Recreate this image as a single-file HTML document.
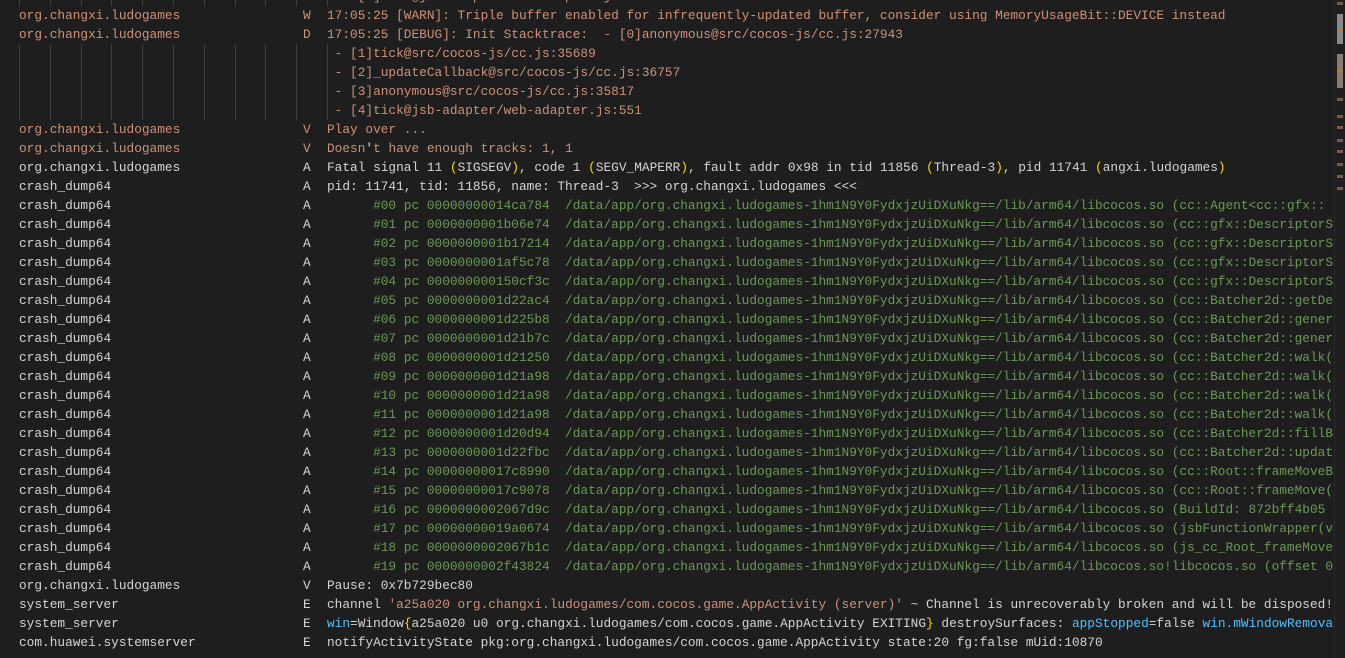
<!DOCTYPE html>
<html><head><style>
html,body{margin:0;padding:0;background:#1e1e1e;width:1345px;height:658px;overflow:hidden}
body{font-family:"Liberation Mono",monospace;font-size:12.8px;color:#d4d4d4;position:relative}
.r{position:absolute;left:0;height:19px;line-height:19px;white-space:pre;width:1335px;overflow:hidden}
.t{position:absolute;left:19px}.l{position:absolute;left:303px}.m{position:absolute;left:327px}
.o{color:#ce9178}.g{color:#6a9955}.y{color:#ffd700}.b{color:#4fc1ff}.bl{color:#569cd6}
.gd{position:absolute;width:1px;background:#404040;top:44px;height:76px}
.gu{position:absolute;width:1px;background:#404040;top:0;height:6px}
.sb{position:absolute;right:0;top:0;width:10px;height:658px;background:#1e1e1e;border-left:1px solid #2a2a2a}
.mk{position:absolute;right:2px;width:6px;height:3px;background:#7a5a4a}
</style></head><body>
<div class="gd" style="left:19px"></div><div class="gd" style="left:50px"></div><div class="gd" style="left:81px"></div><div class="gd" style="left:111px"></div><div class="gd" style="left:142px"></div><div class="gd" style="left:173px"></div><div class="gd" style="left:204px"></div><div class="gd" style="left:235px"></div><div class="gd" style="left:265px"></div><div class="gd" style="left:296px"></div><div class="gd" style="left:327px"></div>
<div class="gu" style="left:19px"></div><div class="gu" style="left:50px"></div><div class="gu" style="left:81px"></div><div class="gu" style="left:111px"></div><div class="gu" style="left:142px"></div><div class="gu" style="left:173px"></div><div class="gu" style="left:204px"></div><div class="gu" style="left:235px"></div><div class="gu" style="left:265px"></div><div class="gu" style="left:296px"></div><div class="gu" style="left:327px"></div>
<div class="r" style="top:-13px"><span class="m o">  - [4]tick@jsb-adapter/web-adapter.js:551</span></div>
<div class="r" style="top:6px"><span class="t o">org.changxi.ludogames</span><span class="l o">W</span><span class="m o">17:05:25 [WARN]: Triple buffer enabled for infrequently-updated buffer, consider using MemoryUsageBit::DEVICE instead</span></div>
<div class="r" style="top:25px"><span class="t o">org.changxi.ludogames</span><span class="l o">D</span><span class="m o">17:05:25 [DEBUG]: Init Stacktrace:  - [0]anonymous@src/cocos-js/cc.js:27943</span></div>
<div class="r" style="top:44px"><span class="m o"> - [1]tick@src/cocos-js/cc.js:35689</span></div>
<div class="r" style="top:63px"><span class="m o"> - [2]_updateCallback@src/cocos-js/cc.js:36757</span></div>
<div class="r" style="top:82px"><span class="m o"> - [3]anonymous@src/cocos-js/cc.js:35817</span></div>
<div class="r" style="top:101px"><span class="m o"> - [4]tick@jsb-adapter/web-adapter.js:551</span></div>
<div class="r" style="top:120px"><span class="t o">org.changxi.ludogames</span><span class="l o">V</span><span class="m o">Play over ...</span></div>
<div class="r" style="top:139px"><span class="t o">org.changxi.ludogames</span><span class="l o">V</span><span class="m o">Doesn<span style="color:#d4d4d4">'</span>t have enough tracks: 1, 1</span></div>
<div class="r" style="top:158px"><span class="t">org.changxi.ludogames</span><span class="l">A</span><span class="m">Fatal signal 11 <span class="y">(</span>SIGSEGV<span class="y">)</span>, code 1 <span class="y">(</span>SEGV_MAPERR<span class="y">)</span>, fault addr 0x98 in tid 11856 <span class="y">(</span>Thread-3<span class="y">)</span>, pid 11741 <span class="y">(</span>angxi.ludogames<span class="y">)</span></span></div>
<div class="r" style="top:177px"><span class="t">crash_dump64</span><span class="l">A</span><span class="m">pid: 11741, tid: 11856, name: Thread-3  &gt;&gt;&gt; org.changxi.ludogames &lt;&lt;&lt;</span></div>
<div class="r" style="top:196px"><span class="t">crash_dump64</span><span class="l">A</span><span class="m g">      #00 pc 00000000014ca784  /data/app/org.changxi.ludogames-1hm1N9Y0FydxjzUiDXuNkg==/lib/arm64/libcocos.so (cc::Agent&lt;cc::gfx::</span></div>
<div class="r" style="top:215px"><span class="t">crash_dump64</span><span class="l">A</span><span class="m g">      #01 pc 0000000001b06e74  /data/app/org.changxi.ludogames-1hm1N9Y0FydxjzUiDXuNkg==/lib/arm64/libcocos.so (cc::gfx::DescriptorS</span></div>
<div class="r" style="top:234px"><span class="t">crash_dump64</span><span class="l">A</span><span class="m g">      #02 pc 0000000001b17214  /data/app/org.changxi.ludogames-1hm1N9Y0FydxjzUiDXuNkg==/lib/arm64/libcocos.so (cc::gfx::DescriptorS</span></div>
<div class="r" style="top:253px"><span class="t">crash_dump64</span><span class="l">A</span><span class="m g">      #03 pc 0000000001af5c78  /data/app/org.changxi.ludogames-1hm1N9Y0FydxjzUiDXuNkg==/lib/arm64/libcocos.so (cc::gfx::DescriptorS</span></div>
<div class="r" style="top:272px"><span class="t">crash_dump64</span><span class="l">A</span><span class="m g">      #04 pc 000000000150cf3c  /data/app/org.changxi.ludogames-1hm1N9Y0FydxjzUiDXuNkg==/lib/arm64/libcocos.so (cc::gfx::DescriptorS</span></div>
<div class="r" style="top:291px"><span class="t">crash_dump64</span><span class="l">A</span><span class="m g">      #05 pc 0000000001d22ac4  /data/app/org.changxi.ludogames-1hm1N9Y0FydxjzUiDXuNkg==/lib/arm64/libcocos.so (cc::Batcher2d::getDe</span></div>
<div class="r" style="top:310px"><span class="t">crash_dump64</span><span class="l">A</span><span class="m g">      #06 pc 0000000001d225b8  /data/app/org.changxi.ludogames-1hm1N9Y0FydxjzUiDXuNkg==/lib/arm64/libcocos.so (cc::Batcher2d::gener</span></div>
<div class="r" style="top:329px"><span class="t">crash_dump64</span><span class="l">A</span><span class="m g">      #07 pc 0000000001d21b7c  /data/app/org.changxi.ludogames-1hm1N9Y0FydxjzUiDXuNkg==/lib/arm64/libcocos.so (cc::Batcher2d::gener</span></div>
<div class="r" style="top:348px"><span class="t">crash_dump64</span><span class="l">A</span><span class="m g">      #08 pc 0000000001d21250  /data/app/org.changxi.ludogames-1hm1N9Y0FydxjzUiDXuNkg==/lib/arm64/libcocos.so (cc::Batcher2d::walk(</span></div>
<div class="r" style="top:367px"><span class="t">crash_dump64</span><span class="l">A</span><span class="m g">      #09 pc 0000000001d21a98  /data/app/org.changxi.ludogames-1hm1N9Y0FydxjzUiDXuNkg==/lib/arm64/libcocos.so (cc::Batcher2d::walk(</span></div>
<div class="r" style="top:386px"><span class="t">crash_dump64</span><span class="l">A</span><span class="m g">      #10 pc 0000000001d21a98  /data/app/org.changxi.ludogames-1hm1N9Y0FydxjzUiDXuNkg==/lib/arm64/libcocos.so (cc::Batcher2d::walk(</span></div>
<div class="r" style="top:405px"><span class="t">crash_dump64</span><span class="l">A</span><span class="m g">      #11 pc 0000000001d21a98  /data/app/org.changxi.ludogames-1hm1N9Y0FydxjzUiDXuNkg==/lib/arm64/libcocos.so (cc::Batcher2d::walk(</span></div>
<div class="r" style="top:424px"><span class="t">crash_dump64</span><span class="l">A</span><span class="m g">      #12 pc 0000000001d20d94  /data/app/org.changxi.ludogames-1hm1N9Y0FydxjzUiDXuNkg==/lib/arm64/libcocos.so (cc::Batcher2d::fillB</span></div>
<div class="r" style="top:443px"><span class="t">crash_dump64</span><span class="l">A</span><span class="m g">      #13 pc 0000000001d22fbc  /data/app/org.changxi.ludogames-1hm1N9Y0FydxjzUiDXuNkg==/lib/arm64/libcocos.so (cc::Batcher2d::updat</span></div>
<div class="r" style="top:462px"><span class="t">crash_dump64</span><span class="l">A</span><span class="m g">      #14 pc 00000000017c8990  /data/app/org.changxi.ludogames-1hm1N9Y0FydxjzUiDXuNkg==/lib/arm64/libcocos.so (cc::Root::frameMoveB</span></div>
<div class="r" style="top:481px"><span class="t">crash_dump64</span><span class="l">A</span><span class="m g">      #15 pc 00000000017c9078  /data/app/org.changxi.ludogames-1hm1N9Y0FydxjzUiDXuNkg==/lib/arm64/libcocos.so (cc::Root::frameMove(</span></div>
<div class="r" style="top:500px"><span class="t">crash_dump64</span><span class="l">A</span><span class="m g">      #16 pc 0000000002067d9c  /data/app/org.changxi.ludogames-1hm1N9Y0FydxjzUiDXuNkg==/lib/arm64/libcocos.so (BuildId: 872bff4b05</span></div>
<div class="r" style="top:519px"><span class="t">crash_dump64</span><span class="l">A</span><span class="m g">      #17 pc 00000000019a0674  /data/app/org.changxi.ludogames-1hm1N9Y0FydxjzUiDXuNkg==/lib/arm64/libcocos.so (jsbFunctionWrapper(v</span></div>
<div class="r" style="top:538px"><span class="t">crash_dump64</span><span class="l">A</span><span class="m g">      #18 pc 0000000002067b1c  /data/app/org.changxi.ludogames-1hm1N9Y0FydxjzUiDXuNkg==/lib/arm64/libcocos.so (js_cc_Root_frameMove</span></div>
<div class="r" style="top:557px"><span class="t">crash_dump64</span><span class="l">A</span><span class="m g">      #19 pc 0000000002f43824  /data/app/org.changxi.ludogames-1hm1N9Y0FydxjzUiDXuNkg==/lib/arm64/libcocos.so!libcocos.so (offset 0</span></div>
<div class="r" style="top:576px"><span class="t">org.changxi.ludogames</span><span class="l">V</span><span class="m">Pause: 0x7b729bec80</span></div>
<div class="r" style="top:595px"><span class="t">system_server</span><span class="l">E</span><span class="m">channel <span class="o">'a25a020 org.changxi.ludogames/com.cocos.game.AppActivity (server)'</span> ~ Channel is unrecoverably broken and will be disposed!</span></div>
<div class="r" style="top:614px"><span class="t">system_server</span><span class="l">E</span><span class="m"><span class="b">win</span>=Window<span class="y">{</span>a25a020 u0 org.changxi.ludogames/com.cocos.game.AppActivity EXITING<span class="y">}</span> destroySurfaces: <span class="b">appStopped</span>=false <span class="b">win.mWindowRemova</span></span></div>
<div class="r" style="top:633px"><span class="t">com.huawei.systemserver</span><span class="l">E</span><span class="m">notifyActivityState pkg:org.changxi.ludogames/com.cocos.game.AppActivity state:20 fg:false mUid:10870</span></div>
<div class="sb">
<div class="mk" style="top:2px"></div><div class="mk" style="top:14px;height:30px;background:#888"></div><div class="mk" style="top:30px;height:1px;background:#c08030"></div>
<div class="mk" style="top:54px;height:34px;background:#8a7a70"></div><div class="mk" style="top:70px;height:1px;background:#c08030"></div>
<div class="mk" style="top:98px"></div><div class="mk" style="top:115px"></div><div class="mk" style="top:126px"></div><div class="mk" style="top:139px"></div><div class="mk" style="top:150px"></div><div class="mk" style="top:163px"></div><div class="mk" style="top:175px"></div><div class="mk" style="top:187px"></div>
</div>
</body></html>
